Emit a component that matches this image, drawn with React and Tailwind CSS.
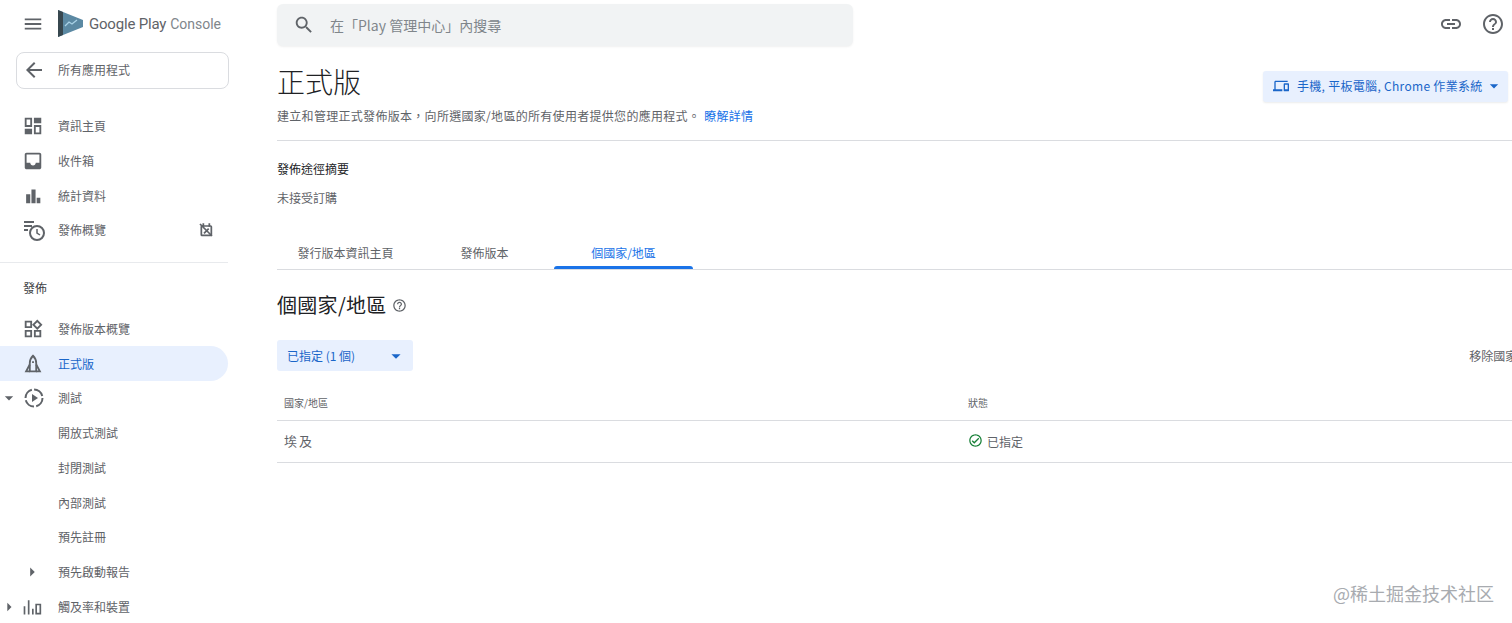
import React from 'react';

const Icon = ({ d, className = '', size = 24, viewBox = '0 0 24 24' }) => (
  <svg width={size} height={size} viewBox={viewBox} fill="currentColor" fillRule="evenodd" className={`shrink-0 ${className}`}>
    <path d={d} />
  </svg>
);

const paths = {
  menu: 'M3 18h18v-2H3v2zm0-5h18v-2H3v2zm0-7v2h18V6H3z',
  back: 'M20 11H7.83l5.59-5.59L12 4l-8 8 8 8 1.41-1.41L7.83 13H20v-2z',
  dashboard: 'M3 3h8v10H3V3zm2 2v6h4V5H5zM13 3h8v6h-8V3zM3 15h8v6H3v-6zM13 11h8v10h-8V11zm2 2v6h4v-6h-4z',
  inbox: 'M19 3H5c-1.1 0-2 .9-2 2v14c0 1.1.9 2 2 2h14c1.1 0 2-.9 2-2V5c0-1.1-.9-2-2-2zm0 2v9h-4c0 1.66-1.34 3-3 3s-3-1.34-3-3H5V5h14z',
  chart: 'M4.500 10h4.500v10H4.500zM10.300 5h4.500v15h-4.500zM16 14h4v6h-4z',
  widgets: 'M16.66 4.52l2.83 2.83-2.83 2.83-2.83-2.83 2.83-2.83M9 5v4H5V5h4m10 10v4h-4v-4h4M9 15v4H5v-4h4m7.66-13.31L11 7.34 16.66 13l5.66-5.66-5.66-5.65zM11 3H3v8h8V3zm10 10h-8v8h8v-8zm-10 0H3v8h8v-8z',
  search: 'M15.5 14h-.79l-.28-.27C15.41 12.59 16 11.11 16 9.5 16 5.91 13.09 3 9.5 3S3 5.91 3 9.5 5.91 16 9.5 16c1.61 0 3.09-.59 4.23-1.57l.27.28v.79l5 4.99L20.49 19l-4.99-5zm-6 0C7.01 14 5 11.99 5 9.5S7.01 5 9.5 5 14 7.01 14 9.5 11.99 14 9.5 14z',
  link: 'M3.9 12c0-1.71 1.39-3.1 3.1-3.1h4V7H7c-2.76 0-5 2.24-5 5s2.24 5 5 5h4v-1.9H7c-1.71 0-3.1-1.39-3.1-3.1zM8 13h8v-2H8v2zm9-6h-4v1.9h4c1.71 0 3.1 1.39 3.1 3.1s-1.39 3.1-3.1 3.1h-4V17h4c2.76 0 5-2.24 5-5s-2.24-5-5-5z',
  help: 'M11 18h2v-2h-2v2zm1-16C6.48 2 2 6.48 2 12s4.48 10 10 10 10-4.48 10-10S17.52 2 12 2zm0 18c-4.41 0-8-3.59-8-8s3.59-8 8-8 8 3.59 8 8-3.59 8-8 8zm0-14c-2.21 0-4 1.79-4 4h2c0-1.1.9-2 2-2s2 .9 2 2c0 2-3 1.75-3 5h2c0-2.25 3-2.5 3-5 0-2.21-1.79-4-4-4z',
  devices: 'M4 6h18V4H4c-1.1 0-2 .9-2 2v11H0v3h14v-3H4V6zm19 2h-6c-.55 0-1 .45-1 1v10c0 .55.45 1 1 1h6c.55 0 1-.45 1-1V9c0-.55-.45-1-1-1zm-1 9h-4v-7h4v7z',
  check: 'M12 2C6.48 2 2 6.48 2 12s4.48 10 10 10 10-4.48 10-10S17.52 2 12 2zm0 18c-4.41 0-8-3.59-8-8s3.59-8 8-8 8 3.59 8 8-3.59 8-8 8zm4.59-12.42L10 14.17l-2.59-2.58L6 13l4 4 8-8z',
  caretDown: 'M7 10l5 5 5-5z',
  caretRight: 'M10 7l5 5-5 5z',
  reach: 'M2 11h2v10H2zM7 4h2v17H7zM12 14h2v7h-2zM16 8h7v13h-7V8zm2 2v9h3v-9h-3z',
};

const LogIcon = () => (
  <svg width="24" height="24" viewBox="0 0 24 24" className="shrink-0 text-[#5f6368]" fill="none" stroke="currentColor" strokeWidth="2">
    <path d="M2 4h10M2 8h8M2 12h4" />
    <circle cx="15" cy="15" r="7" />
    <path d="M15 11v4l3 2" strokeWidth="1.500" />
  </svg>
);

const TestIcon = () => (
  <svg width="24" height="24" viewBox="0 0 24 24" className="shrink-0 text-[#5f6368]" fill="none">
    <circle cx="12" cy="12" r="8.500" stroke="currentColor" strokeWidth="2" strokeDasharray="11 2.300" />
    <path d="M10 8l6 4-6 4z" fill="currentColor" />
  </svg>
);

const RocketIcon = () => (
  <svg width="22" height="22" viewBox="0 0 24 24" className="shrink-0 text-[#5f6368]" fill="none" stroke="currentColor" strokeWidth="2">
    <path d="M12 3c-2.500 2.500-3.500 5-3.500 8v9h7v-9c0-3-1-5.500-3.500-8z" />
    <path d="M8.500 12.500L4.500 20h4M15.500 12.500l4 7.500h-4M12 9v2" />
  </svg>
);

const SyncOffIcon = () => (
  <svg width="16" height="16" viewBox="0 0 24 24" className="shrink-0 text-[#5f6368]" fill="none" stroke="currentColor" strokeWidth="2.600">
    <rect x="5" y="6" width="15" height="14" rx="1" />
    <path d="M8 2v5M17 2v5M3 3l18 18M9 17l7-7" />
  </svg>
);

const NavRow = ({ icon, label, active, caret, end }) => (
  <div className={`relative flex h-[34.700px] w-[228px] items-center rounded-r-full pl-[22px] ${active ? 'bg-[#e8f0fe] text-[#1a66c9]' : 'text-[#5f6368]'}`}>
    {caret && (
      <span className="absolute left-[-1px] text-[#5f6368]">
        <Icon d={caret} size={20} />
      </span>
    )}
    <span className="flex w-[36px] shrink-0 items-center text-[#5f6368]">{icon}</span>
    <span className="text-xs">{label}</span>
    {end && <span className="ml-auto mr-[14px]">{end}</span>}
  </div>
);

const Sidebar = () => (
  <aside className="w-[277px] shrink-0">
    <div className="flex h-[48px] items-center pl-[22px]">
      <Icon d={paths.menu} size={22} className="text-[#5f6368]" />
      <svg width="25" height="28" viewBox="0 0 25 28" className="ml-[14px] shrink-0">
        <path d="M0 0l25 10v7L0 27z" fill="#5b89a3" />
        <path d="M0 0l5 2v23l-5 2z" fill="#37474f" />
        <path d="M7 16l4-4 3 2 5-4" fill="none" stroke="#a9d2e6" strokeWidth="1.300" />
      </svg>
      <span className="ml-[6px] font-['Roboto',sans-serif] text-[15px] tracking-[-0.200px] text-[#5f6368]">Google Play</span>
      <span className="ml-[4px] font-['Roboto',sans-serif] text-[14px] text-[#80868b]">Console</span>
    </div>
    <div className="ml-4 mt-1 flex h-[37px] w-[213px] items-center rounded-lg border border-[#dadce0] pb-[2px] pl-[5px] text-xs text-[#5f6368]">
      <Icon d={paths.back} className="text-[#5f6368]" />
      <span className="ml-[12px]">所有應用程式</span>
    </div>
    <div className="mt-5">
      <NavRow icon={<Icon d={paths.dashboard} size={22} />} label="資訊主頁" />
      <NavRow icon={<Icon d={paths.inbox} size={22} />} label="收件箱" />
      <NavRow icon={<Icon d={paths.chart} size={22} />} label="統計資料" />
      <NavRow icon={<LogIcon />} label="發佈概覽" end={<SyncOffIcon />} />
    </div>
    <div className="mt-[14.500px] h-px w-[228px] bg-[#e8eaed]" />
    <div className="flex h-[48.500px] items-center pl-[23px] text-xs text-[#3c4043]">發佈</div>
    <NavRow icon={<Icon d={paths.widgets} size={22} />} label="發佈版本概覽" />
    <NavRow icon={<RocketIcon />} label="正式版" active />
    <NavRow icon={<TestIcon />} label="測試" caret={paths.caretDown} />
    <NavRow label="開放式測試" />
    <NavRow label="封閉測試" />
    <NavRow label="內部測試" />
    <NavRow label="預先註冊" />
    <NavRow icon={<Icon d={paths.caretRight} size={22} className="-ml-[1px]" />} label="預先啟動報告" />
    <NavRow icon={<Icon d={paths.reach} size={20} />} label="觸及率和裝置" caret={paths.caretRight} />
  </aside>
);

const Tab = ({ label, active, className }) => (
  <div className={`relative flex h-[33px] items-center justify-center text-xs ${active ? 'text-[#1a73e8]' : 'text-[#5f6368]'} ${className}`}>
    {label}
    {active && <span className="absolute inset-x-0 bottom-0 h-[3px] rounded-t-sm bg-[#1a73e8]" />}
  </div>
);

export default function App() {
  return (
    <div className="relative flex h-[623px] w-[1512px] overflow-hidden bg-white font-['Noto_Sans_CJK_TC','Noto_Sans',sans-serif]">
      <Sidebar />

      <main className="w-[1235px] shrink-0">
        <div className="flex items-start justify-between pt-1">
          <div className="flex h-[42px] w-[576px] items-center rounded-md bg-[#f1f3f4] pl-[16px] shadow-[0_1px_2px_rgba(60,64,67,0.08)]">
            <Icon d={paths.search} className="text-[#5f6368]" size={22} />
            <span className="ml-[15px] mt-[1px] text-[14px] text-[#80868b]">在「Play 管理中心」內搜尋</span>
          </div>
          <div className="flex items-center gap-[18px] pr-[7px] pt-[8px] text-[#5f6368]">
            <Icon d={paths.link} />
            <Icon d={paths.help} />
          </div>
        </div>

        <div className="flex items-start justify-between pr-1">
          <div>
            <h1 className="mt-[15px] text-[28px] leading-[40px] font-light text-[#202124]">正式版</h1>
            <p className="mt-[6px] text-xs leading-[18px] tracking-[0.300px] text-[#5f6368]">
              建立和管理正式發佈版本，向所選國家/地區的所有使用者提供您的應用程式。
              <span className="ml-[4px] text-[#1a73e8]">瞭解詳情</span>
            </p>
          </div>
          <div className="mt-[25px] flex h-[31px] w-[245px] items-center rounded-[3px] bg-[#e8f0fe] pb-[1px] pl-[10px] text-xs text-[#1a66c9] shadow-[0_1px_2px_rgba(60,64,67,0.1)]">
            <Icon d={paths.devices} size={16} />
            <span className="ml-[8px] whitespace-nowrap tracking-[0.300px]">手機, 平板電腦, Chrome 作業系統</span>
            <Icon d={paths.caretDown} size={20} className="ml-[1px]" />
          </div>
        </div>

        <div className="mt-[15px] h-px bg-[#dadce0]" />
        <div className="mt-[19px] text-xs leading-[18px] text-[#202124]">發佈途徑摘要</div>
        <div className="mt-[11px] text-xs leading-[18px] text-[#5f6368]">未接受訂購</div>

        <div className="mt-[29px] flex border-b border-[#dadce0]">
          <Tab label="發行版本資訊主頁" className="w-[137px]" />
          <Tab label="發佈版本" className="ml-[1px] w-[139px]" />
          <Tab label="個國家/地區" active className="w-[139px]" />
        </div>

        <div className="mt-[21px] flex h-[28px] items-center text-[#202124]">
          <h2 className="text-[20px] font-normal tracking-[0.300px]">個國家/地區</h2>
          <Icon d={paths.help} size={15} className="ml-[5px] text-[#5f6368]" />
        </div>

        <div className="mt-[21px] flex w-[1269px] items-center justify-between">
          <div className="flex h-[31px] w-[136px] items-center justify-between rounded-[3px] bg-[#e8f0fe] pl-[10px] pr-[6px] text-xs text-[#1a66c9]">
            已指定 (1 個)
            <Icon d={paths.caretDown} size={22} />
          </div>
          <span className="whitespace-nowrap text-xs text-[#5f6368]">移除國家/地區</span>
        </div>

        <div className="mt-[21px] flex h-[29px] items-start border-b border-[#dadce0] text-[10px] text-[#5f6368]">
          <span className="w-[691px] pl-[7px] pt-[3px]">國家/地區</span>
          <span className="pt-[3px]">狀態</span>
        </div>
        <div className="flex h-[42px] items-center border-b border-[#dadce0]">
          <span className="w-[691px] pb-[2px] pl-[7px] text-[13px] tracking-[2px] text-[#5f6368]">埃及</span>
          <Icon d={paths.check} size={15} className="mb-[2px] text-[#188038]" />
          <span className="ml-[4px] text-xs text-[#5f6368]">已指定</span>
        </div>
      </main>

      <div className="absolute right-[18px] top-[582px] text-[18px] leading-[22px] text-[#a8abb0]">@稀土掘金技术社区</div>
    </div>
  );
}
